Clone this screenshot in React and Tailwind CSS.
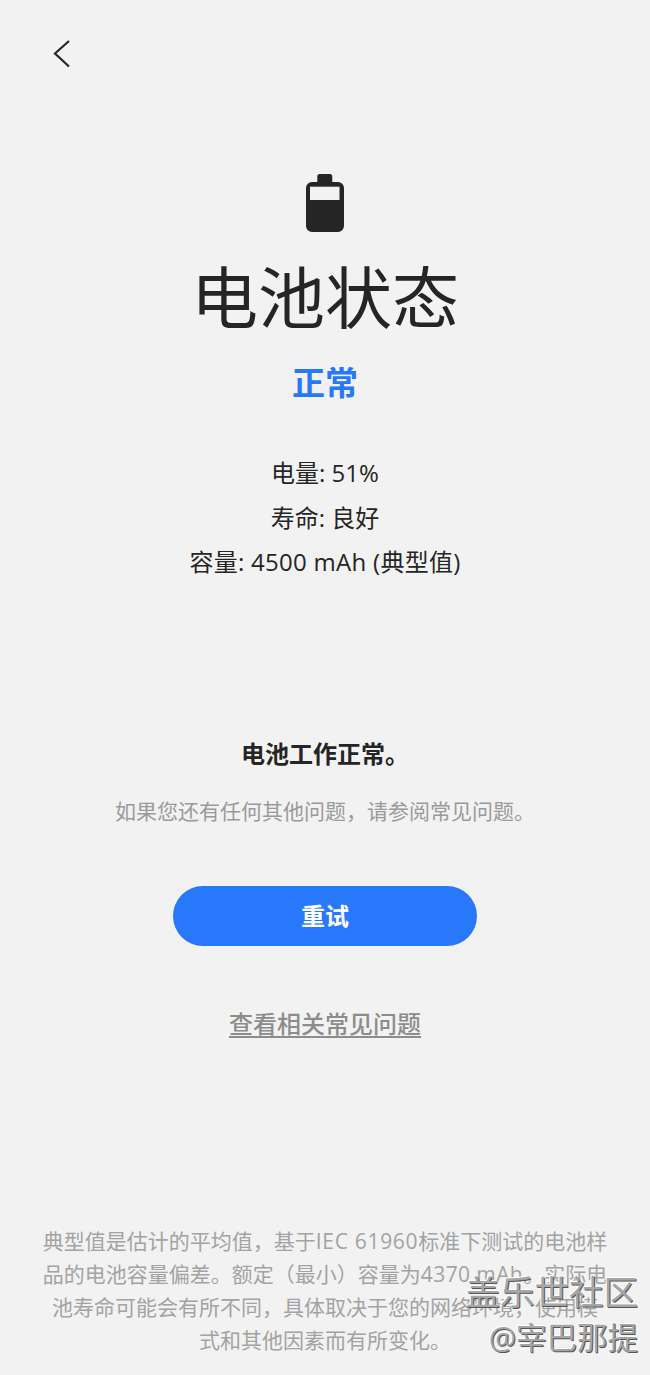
import React from "react";

const BackIcon = () => (
    <svg width="18" height="28" viewBox="0 0 18 28" fill="none">
        <path d="M16 1 L2 13.5 L16 26.5" stroke="#252525" strokeWidth="2.2" />
    </svg>
);

const BatteryIcon = () => (
    <svg width="38" height="58" viewBox="0 0 38 58">
        <path
            d="M11.3 8V2.5A2.5 2.5 0 0 1 13.8 0h10a2.5 2.5 0 0 1 2.5 2.5V8H32a6 6 0 0 1 6 6v38a6 6 0 0 1-6 6H6a6 6 0 0 1-6-6V14a6 6 0 0 1 6-6z"
            fill="#252525"
        />
        <rect x="4" y="12.7" width="29.5" height="13.3" fill="#f2f2f2" />
    </svg>
);

const App = () => {
    return (
        <div className="relative flex h-[1375px] w-[650px] flex-col items-center overflow-hidden bg-[#f2f2f2] text-center font-['Open_Sans','Noto_Sans_CJK_SC',sans-serif] text-[#252525]">
            <div className="flex w-full pt-[40px] pl-[53px]">
                <BackIcon />
            </div>

            <div className="mt-[106px]">
                <BatteryIcon />
            </div>
            <h1 className="mt-[25px] text-[67px] leading-[80px] font-normal">
                电池状态
            </h1>
            <div className="mt-[24px] text-[33px] leading-[44px] font-bold text-[#2878fc]">
                正常
            </div>

            <div className="mt-[46px] flex flex-col text-[24px] leading-[44.5px]">
                <span>电量: 51%</span>
                <span>寿命: 良好</span>
                <span className="tracking-[0.28px]">容量: 4500 mAh (典型值)</span>
            </div>

            <div className="mt-[151px] text-[24px] leading-[36px] font-bold">
                电池工作正常。
            </div>
            <p className="mt-[21px] text-[21px] leading-[36px] text-[#9a9a9a]">
                如果您还有任何其他问题，请参阅常见问题。
            </p>

            <button className="mt-[57px] h-[60px] w-[304px] rounded-full bg-[#2878fc] text-[24px] font-bold text-white">
                重试
            </button>

            <a className="mt-[60px] text-[24px] leading-[36px] font-medium text-[#8c8c8c] underline underline-offset-[3px]">
                查看相关常见问题
            </a>

            <p className="mt-auto mb-[18px] w-full px-[42px] text-[21px] leading-[33px] text-[#a3a3a3]">
                典型值是估计的平均值，基于<span className="tracking-[0.7px]">IEC 61960</span>标准下测试的电池样品的电池容量偏差。额定（最小）容量为<span className="tracking-[0.4px]">4370 mAh</span>。实际电池寿命可能会有所不同，具体取决于您的网络环境，使用模式和其他因素而有所变化。
            </p>

            {/* forum watermark over the footer text */}
            <div className="absolute top-[1271px] right-[12px] flex flex-col items-end text-[#a6a6a6] [text-shadow:1px_1px_0_#555,-1px_-1px_0_#fff]">
                <span className="text-[34.5px] leading-[42px]">盖乐世社区</span>
                <span className="mt-[6px] text-[30.5px] leading-[36px]">@宰巴那提</span>
            </div>
        </div>
    );
};

export default App;
